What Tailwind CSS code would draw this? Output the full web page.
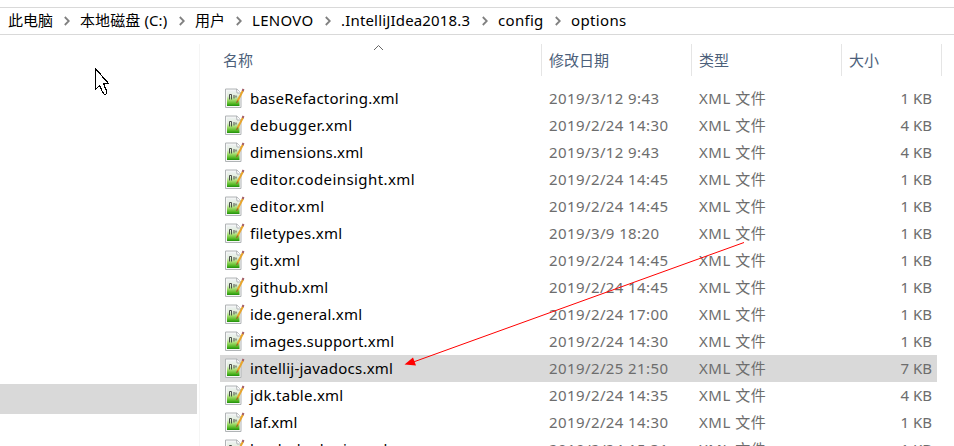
<!DOCTYPE html>
<html lang="zh-CN">
<head>
<meta charset="utf-8">
<title>options</title>
<script src="https://cdn.jsdelivr.net/npm/@tailwindcss/browser@4"></script>
</head>
<body class="bg-white">
<div class="relative flex h-[446px] w-[954px] flex-col overflow-hidden bg-white font-['Noto_Sans','Noto_Sans_CJK_SC',sans-serif] text-[15px] leading-[27px] text-black">
  <nav id="crumbs" class="mt-[7px] flex h-7 shrink-0 items-center border-y border-[#d9d9d9] pb-[2px] pl-2"></nav>
  <div class="flex min-h-0 flex-1">
    <aside class="mt-[9px] flex w-[200px] shrink-0 flex-col border-r border-[#f5f5f5]">
      <div class="mt-[340px] h-[30px] w-[197px] bg-[#d9d9d9]"></div>
    </aside>
    <main class="flex min-w-0 flex-1 flex-col pt-[9px]">
      <header class="flex h-8 w-[742px] shrink-0 text-[#4c607a]">
        <div class="relative w-[342px] border-r border-[#e5e5e5] pl-[23px] pt-[3px]">名称
          <svg class="absolute left-[173px] top-0 h-[7px] w-[11px]" viewBox="0 0 11 7" fill="none" stroke="#666"><path d="M1 6 5.5 1.5 10 6"/></svg>
        </div>
        <div class="w-[150px] border-r border-[#e5e5e5] pl-[7px] pt-[3px]">修改日期</div>
        <div class="w-[150px] border-r border-[#e5e5e5] pl-[7px] pt-[3px]">类型</div>
        <div class="w-[100px] border-r border-[#e5e5e5] pl-[7px] pt-[3px]">大小</div>
      </header>
      <div id="files" class="ml-5 mt-[9px] w-[717px]"></div>
    </main>
  </div>
  <svg class="absolute left-0 top-0 h-[446px] w-[954px]" viewBox="0 0 954 446">
    <path d="M744 242.500 412 362.500" stroke="#f00" fill="none"/>
    <path d="M404.500 364.500 413 357.500 416 365.500Z" fill="#f00"/>
    <path d="M95.500 68.500V89.500L99.500 85.500 102.500 92Q104 95 106 94 107.500 93 106.500 91L103.500 83.500H108.500Z" fill="#fff" stroke="#000" stroke-width="1.200" shape-rendering="crispEdges"/>
  </svg>
</div>
<script>
// [label, width to the next crumb, letter spacing]
const crumbs = [['此电脑',72,0],['本地磁盘 (C:)',115,.1],['用户',57,0],['LENOVO',89,.3],['.IntelliJIdea2018.3',157,.17],['config',73,.3],['options',80,.35]];
document.getElementById('crumbs').innerHTML = crumbs.map(([t,w,k],i) =>
  `<div class="flex items-center justify-between whitespace-nowrap" style="width:${w}px"><span style="letter-spacing:${k}px">${t}</span>${i < 6 ? '<svg class="relative top-px mr-[10px] h-[10px] w-[6px]" viewBox="0 0 6 10" fill="none" stroke="#808080" stroke-width="1.800"><path d="M.8 1 4.800 5 .8 9"/></svg>' : ''}</div>`).join('');
// [name, modified, size in KB, letter spacing of the name]
const files = [['baseRefactoring','2019/3/12 9:43',1,.22],['debugger','2019/2/24 14:30',4,.5],['dimensions','2019/3/12 9:43',4,.15],['editor.codeinsight','2019/2/24 14:45',1,.42],['editor','2019/2/24 14:45',1,.5],['filetypes','2019/3/9 18:20',1,.24],['git','2019/2/24 14:45',1,.28],['github','2019/2/24 14:45',1,.22],['ide.general','2019/2/24 17:00',1,.22],['images.support','2019/2/24 14:30',1,.2],['intellij-javadocs','2019/2/25 21:50',7,.24],['jdk.table','2019/2/24 14:35',4,.24],['laf','2019/2/24 14:30',1,.05],['lombok-plugin','2019/2/24 15:31',1,.3]];
const icon = `<svg class="ml-[5px] h-[21px] w-5 shrink-0" viewBox="0 0 20 21">
<defs><linearGradient id="g" x2="0" y2="1"><stop stop-color="#eef2f3"/><stop offset=".35" stop-color="#e2eedb"/><stop offset=".6" stop-color="#a5dd70"/><stop offset=".85" stop-color="#54b824"/><stop offset="1" stop-color="#1f8f0c"/></linearGradient></defs>
<path d="M.5 1H12L16 5V19.500H.5Z" fill="#f7f7f7" stroke="#b0b4b6"/><path d="M2 2.500H12L14.500 5.500V18H2Z" fill="url(#g)"/><path d="M11.500 1 12 5H16" fill="#fff" stroke="#b0b4b6"/>
<path d="M4.500 11.500V6.500H6.500V11.500M9 7V10.500M11 7.500V9.500" stroke="#4a4f48" fill="none"/>
<path d="M18 2.500 12.500 13" stroke="#e8a52c" stroke-width="2"/><path d="M12.800 12.500 11.500 15" stroke="#9c6a2a" stroke-width="1.300"/><path d="M17.600 3 18.500 1" stroke="#a05a64" stroke-width="2"/></svg>`;
document.getElementById('files').innerHTML = files.map(([n,d,s,k]) =>
  `<div class="flex h-[27px] items-center whitespace-nowrap text-[#6d6d6d] ${s === 7 ? 'bg-[#d9d9d9]' : ''}">${icon}<span class="ml-[5px] w-[299px] text-black" style="letter-spacing:${k}px">${n}.xml</span><span class="w-[150px] tracking-[0.4px]">${d}</span><span class="w-[150px] tracking-[0.5px]">XML 文件</span><span class="w-[83px] text-right">${s} KB</span></div>`).join('');
</script>
</body>
</html>
